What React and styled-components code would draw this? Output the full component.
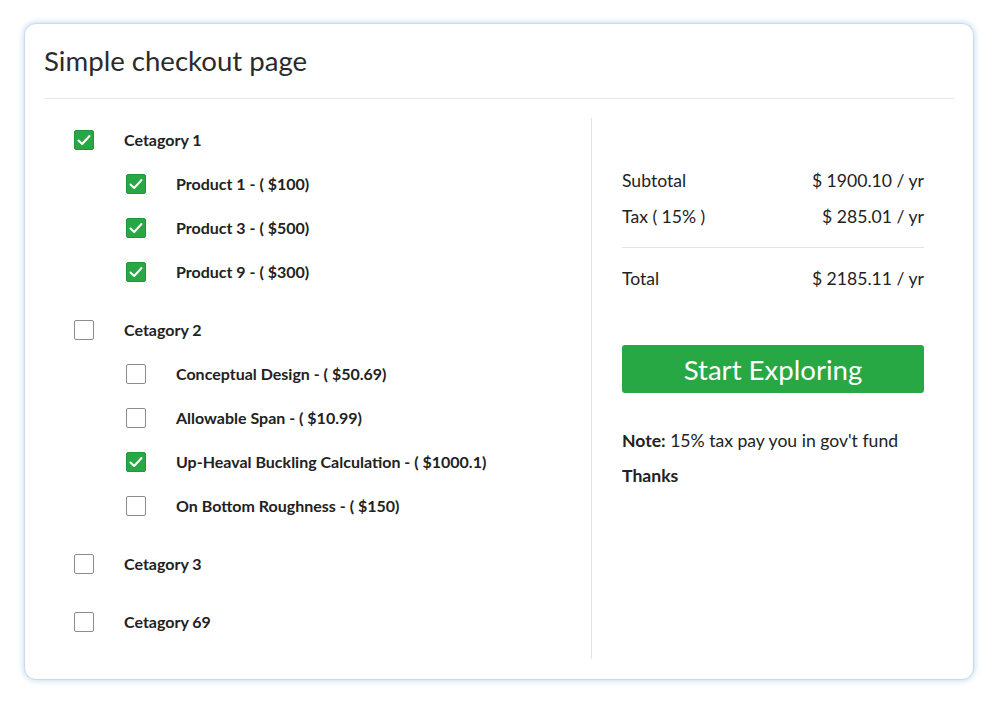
import React from "react";
import styled, { createGlobalStyle } from "styled-components";

const Global = createGlobalStyle`
  html, body { margin: 0; padding: 0; background: #fff; }
  body { font-family: Lato, "Open Sans", sans-serif; color: #212529; }
  * { box-sizing: border-box; }
`;

const Page = styled.div`
  padding: 23px 27px 30px 24px;
`;

const Card = styled.div`
  width: 950px;
  height: 657px;
  background: #fff;
  border-radius: 12px;
  border: 1px solid #c6dceb;
  box-shadow: 0 0 6px rgba(80, 145, 200, 0.4);
  padding: 0 19px;
  display: flex;
  flex-direction: column;
`;

const Header = styled.div`
  padding: 20px 0 20px;
  border-bottom: 1px solid #e6e6e6;
`;

const Title = styled.h1`
  margin: 0;
  font-family: Lato, sans-serif;
  font-weight: 400;
  font-size: 27.6px;
  line-height: 34px;
  color: #2b2b2b;
`;

const Body = styled.div`
  display: flex;
  padding: 20px 0 20px;
  flex: 1;
`;

const LeftCol = styled.div`
  width: 548px;
  border-right: 1px solid #e3e3e3;
  padding: 0 30px;
  margin-top: -1px;
`;

const RightCol = styled.div`
  flex: 1;
  padding: 43px 30px 0 30px;
`;

const Group = styled.div`
  margin-bottom: 14px;
`;

const Row = styled.label`
  display: flex;
  align-items: center;
  height: 44px;
  padding-left: ${(p) => (p.$child ? "52px" : "0")};
`;

const Box = styled.span`
  width: 20px;
  height: 20px;
  flex: none;
  border-radius: 2px;
  border: 1px solid ${(p) => (p.$checked ? "#23963d" : "#8c8c8c")};
  background: ${(p) => (p.$checked ? "#28a745" : "#fff")};
  display: flex;
  align-items: center;
  justify-content: center;
`;

const Label = styled.span`
  margin-left: 30px;
  font-weight: 700;
  font-size: 16px;
  line-height: 20px;
  color: #222;
`;

const SumRow = styled.div`
  display: flex;
  justify-content: space-between;
  align-items: center;
  height: 36px;
  font-size: 17.6px;
  color: #222;
`;

const Divider = styled.div`
  height: 1px;
  background: #e2e2e8;
  margin: 13px 0 12px;
`;

const Button = styled.button`
  display: block;
  width: 100%;
  height: 48px;
  margin-top: 49px;
  border: none;
  border-radius: 3px;
  background: #28a745;
  color: #fff;
  font-family: Lato, sans-serif;
  font-size: 27.6px;
  font-weight: 400;
  padding: 0;
  cursor: pointer;
`;

const Note = styled.p`
  margin: 36px 0 0;
  font-size: 17.6px;
  line-height: 24px;
  color: #222;
  b { font-weight: 700; }
`;

const Thanks = styled.p`
  margin: 11px 0 0;
  font-size: 17.6px;
  line-height: 24px;
  font-weight: 700;
  color: #222;
`;

const Check = () => (
  <svg width="16" height="16" viewBox="0 0 16 16">
    <path d="M2.5 8.5 L6.2 12 L13.5 4" fill="none" stroke="#fff" strokeWidth="2" strokeLinecap="round" strokeLinejoin="round" />
  </svg>
);

const Item = ({ checked, child, children }) => (
  <Row $child={child}>
    <Box $checked={checked}>{checked && <Check />}</Box>
    <Label>{children}</Label>
  </Row>
);

const categories = [
  {
    name: "Cetagory 1",
    checked: true,
    items: [
      { name: "Product 1 - ( $100)", checked: true },
      { name: "Product 3 - ( $500)", checked: true },
      { name: "Product 9 - ( $300)", checked: true },
    ],
  },
  {
    name: "Cetagory 2",
    checked: false,
    items: [
      { name: "Conceptual Design - ( $50.69)", checked: false },
      { name: "Allowable Span - ( $10.99)", checked: false },
      { name: "Up-Heaval Buckling Calculation - ( $1000.1)", checked: true },
      { name: "On Bottom Roughness - ( $150)", checked: false },
    ],
  },
  { name: "Cetagory 3", checked: false, items: [] },
  { name: "Cetagory 69", checked: false, items: [] },
];

export default function App() {
  return (
    <Page>
      <Global />
      <Card>
        <Header>
          <Title>Simple checkout page</Title>
        </Header>
        <Body>
          <LeftCol>
            {categories.map((c) => (
              <Group key={c.name}>
                <Item checked={c.checked}>{c.name}</Item>
                {c.items.map((it) => (
                  <Item key={it.name} child checked={it.checked}>
                    {it.name}
                  </Item>
                ))}
              </Group>
            ))}
          </LeftCol>
          <RightCol>
            <SumRow>
              <span>Subtotal</span>
              <span>$ 1900.10 / yr</span>
            </SumRow>
            <SumRow>
              <span>Tax ( 15% )</span>
              <span>$ 285.01 / yr</span>
            </SumRow>
            <Divider />
            <SumRow>
              <span>Total</span>
              <span>$ 2185.11 / yr</span>
            </SumRow>
            <Button>Start Exploring</Button>
            <Note>
              <b>Note:</b> 15% tax pay you in gov't fund
            </Note>
            <Thanks>Thanks</Thanks>
          </RightCol>
        </Body>
      </Card>
    </Page>
  );
}
